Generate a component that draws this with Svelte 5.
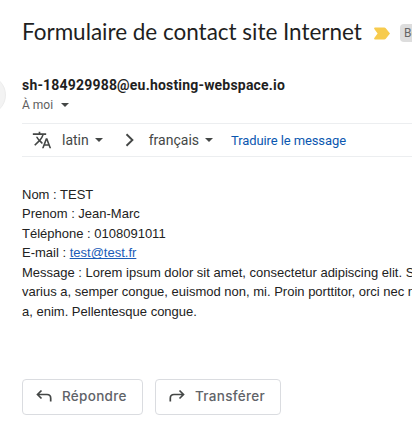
<script lang="ts">
  const subject = 'Formulaire de contact site Internet'
  const sender = 'sh-184929988@eu.hosting-webspace.io'

  const fields = [
    { label: 'Nom', value: 'TEST' },
    { label: 'Prenom', value: 'Jean-Marc' },
    { label: 'Téléphone', value: '0108091011' },
  ]

  const messageLines = [
    'Message : Lorem ipsum dolor sit amet, consectetur adipiscing elit. Sed non risus.',
    'varius a, semper congue, euismod non, mi. Proin porttitor, orci nec nonummy',
    'a, enim. Pellentesque congue.',
  ]
</script>

<main class="mail">
  <header class="subject">
    <h1>{subject}</h1>
    <svg class="marker" width="16" height="13" viewBox="0 0 16 13">
      <path d="M1 .5h9.2c.7 0 1.2.3 1.6.8L16 6.5l-4.2 5.2c-.4.5-.9.8-1.6.8H1c-.8 0-1.1-.8-.7-1.4L3.6 6.5.3 1.9C-.1 1.3.2.5 1 .5z" fill="#f7cb4d" />
    </svg>
    <span class="label">Boîte de réception</span>
  </header>

  <section class="sender">
    <span class="avatar"></span>
    <div class="sender-info">
      <strong>{sender}</strong>
      <button type="button" class="recipient">
        <span>À moi</span>
        <i class="caret"></i>
      </button>
    </div>
  </section>

  <nav class="translate">
    <svg class="translate-icon" width="20" height="20" viewBox="0 0 24 24" fill="#444746">
      <path d="M12.87 15.07l-2.54-2.51.03-.03A17.52 17.52 0 0 0 14.07 6H17V4h-7V2H8v2H1v1.990h11.17C11.5 7.92 10.44 9.75 9 11.35 8.07 10.32 7.3 9.19 6.69 8h-2c.73 1.63 1.73 3.17 2.98 4.56l-5.09 5.020L4 19l5-5 3.110 3.110.76-2.040zM18.5 10h-2L12 22h2l1.12-3h4.75L21 22h2l-4.5-12zm-2.62 7l1.62-4.33L19.12 17h-3.24z" />
    </svg>
    <span class="source">latin</span>
    <i class="caret"></i>
    <svg class="chevron" width="10" height="14" viewBox="0 0 10 14">
      <path d="M1.5 1.3L7.4 7l-5.9 5.7" fill="none" stroke="#444746" stroke-width="1.9" />
    </svg>
    <span class="language">français</span>
    <i class="caret"></i>
    <a class="translate-link" href="#translate">Traduire le message</a>
  </nav>

  <article class="body">
    {#each fields as field}
      <p>{field.label} : {field.value}</p>
    {/each}
    <p>E-mail : <a href="mailto:test@test.fr">test@test.fr</a></p>
    {#each messageLines as line}
      <p>{line}</p>
    {/each}
  </article>

  <footer class="actions">
    <button type="button" class="action">
      <svg width="16" height="14" viewBox="0 0 16 14">
        <path d="M5.5 1.5l-4 4 4 4M1.5 5.5H11c2.3 0 3.7 1.4 3.7 3.7v3.3" />
      </svg>
      <span>Répondre</span>
    </button>
    <button type="button" class="action">
      <svg width="16" height="14" viewBox="0 0 16 14">
        <path d="M10.5 1.5l4 4-4 4M14.5 5.5H5C2.7 5.5 1.3 6.9 1.3 9.2v3.3" />
      </svg>
      <span>Transférer</span>
    </button>
  </footer>
</main>

<style>
  :global(body) {
    margin: 0;
    background: #fff;
  }

  .mail {
    box-sizing: border-box;
    width: 100%;
    height: 435px;
    padding: 16px 0 0 22px;
    overflow: hidden;
    color: #222;
    font-family: Roboto, sans-serif;
    white-space: nowrap;
  }

  button {
    padding: 0;
    border: 0;
    background: none;
    font: inherit;
  }

  .subject {
    display: flex;
    align-items: center;
    height: 34px;
  }

  h1 {
    flex: none;
    width: 340px;
    margin: 0;
    padding-bottom: 2px;
    color: #1f1f1f;
    font-family: Lato, sans-serif;
    font-size: 22.5px;
    font-weight: 400;
    letter-spacing: -0.02px;
    line-height: 32px;
  }

  .marker {
    flex: none;
    margin-left: 12px;
  }

  .label {
    flex: none;
    margin-left: 10px;
    padding: 0 4px;
    border-radius: 4px;
    background: #ddd;
    color: #666;
    font-size: 12px;
    line-height: 18px;
  }

  .sender {
    display: flex;
    align-items: flex-start;
    height: 48px;
    margin: 25px 0 0 -56px;
  }

  .avatar {
    box-sizing: border-box;
    flex: none;
    width: 40px;
    height: 40px;
    border: 1px solid #ececec;
    border-radius: 50%;
    background: #f3f3f3;
  }

  .sender-info {
    margin-left: 16px;
  }

  strong {
    display: block;
    color: #1f1f1f;
    font-size: 14px;
    font-weight: 700;
    letter-spacing: 0.19px;
    line-height: 20px;
  }

  .recipient {
    display: flex;
    align-items: center;
    gap: 8px;
    color: #5e5e5e;
    font-size: 12px;
    line-height: 20px;
  }

  .caret {
    flex: none;
    border: 4px solid transparent;
    border-top-color: #444746;
    border-bottom: 0;
  }

  .translate {
    box-sizing: border-box;
    display: flex;
    align-items: center;
    height: 34px;
    border-top: 1px solid #eceef0;
    border-bottom: 1px solid #eceef0;
    color: #444746;
    font-size: 14px;
  }

  .translate-icon {
    margin: 0 10px;
  }

  .source,
  .language {
    margin-right: 6px;
  }

  .chevron {
    margin: 0 14px 0 22px;
  }

  .translate-link {
    margin-left: 18px;
    color: #0b57b0;
    font-size: 13px;
    letter-spacing: -0.1px;
    text-decoration: none;
  }

  .body {
    height: 137px;
    margin-top: 27.9px;
    font-family: 'Liberation Sans', Arial, sans-serif;
    font-size: 13px;
    line-height: 19.5px;
  }

  .body p {
    margin: 0;
  }

  .body a {
    color: #1a5cb8;
  }

  .actions {
    display: flex;
    gap: 12px;
    margin-top: 57.1px;
  }

  .action {
    box-sizing: border-box;
    display: flex;
    align-items: center;
    gap: 10px;
    width: 121px;
    height: 36px;
    padding: 0 0 1px 13px;
    border: 1px solid #dadce0;
    border-radius: 4px;
    color: #5f6368;
    font-family: Inter, sans-serif;
    font-size: 13.5px;
    font-weight: 500;
    letter-spacing: 0.3px;
  }

  .action:last-child {
    width: 126px;
  }

  .action path {
    fill: none;
    stroke: #444746;
    stroke-width: 1.7;
  }
</style>
